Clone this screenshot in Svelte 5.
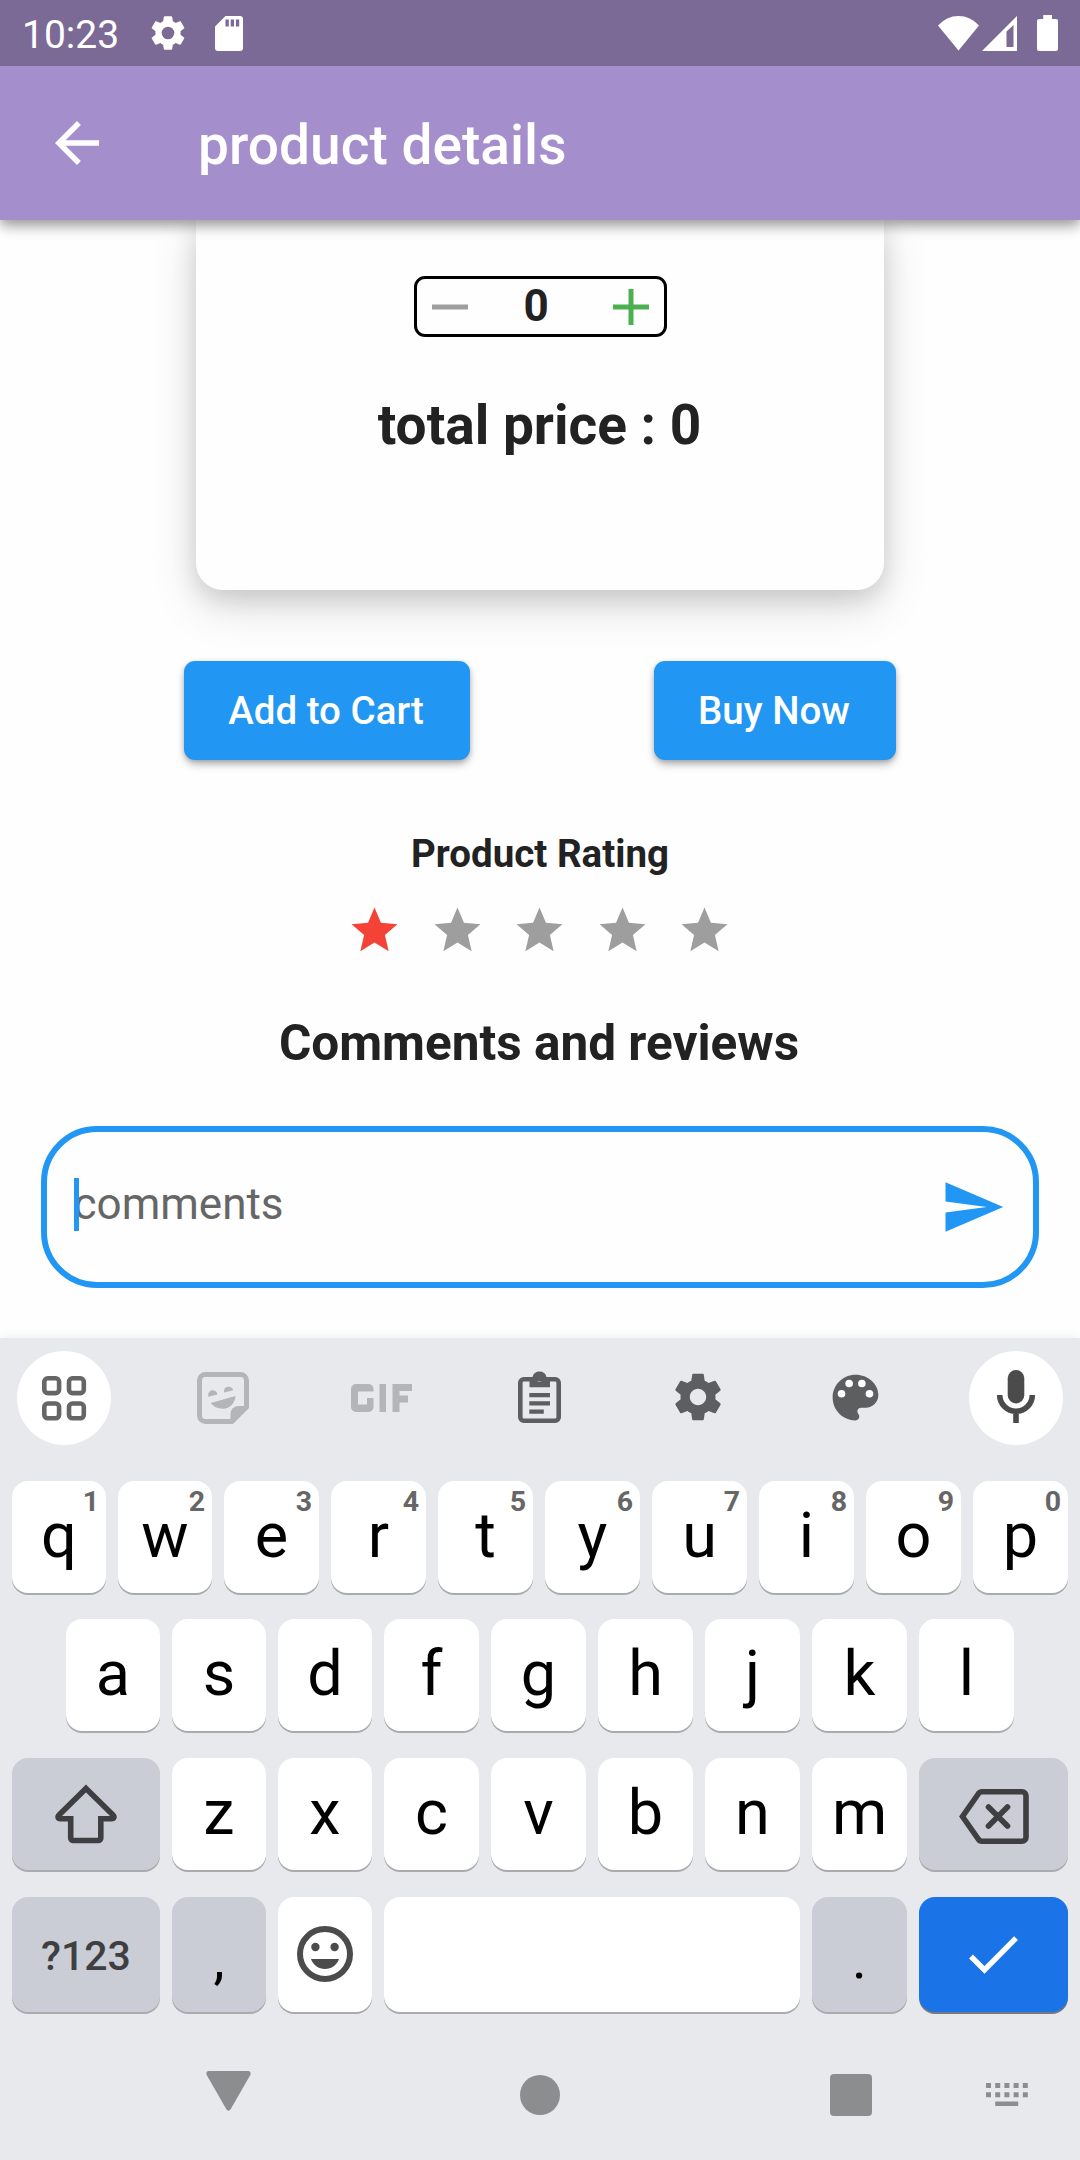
<script>
  const stars = [1, 2, 3, 4, 5];
  let rating = $state(1);
  let quantity = $state(0);

  const topRow = 'qwertyuiop'.split('').map((letter, i) => ({ letter, hint: (i + 1) % 10 }));
  const middleRow = 'asdfghjkl'.split('');
  const bottomRow = 'zxcvbnm'.split('');
</script>

<div class="screen">
  <header class="status">
    <span class="time">10:23</span>
    <svg class="status-gear" viewBox="0 0 24 24"><path d="M19.14 12.94c.04-.3.06-.61.06-.94 0-.32-.02-.64-.07-.94l2.03-1.58c.18-.14.23-.41.12-.61l-1.92-3.32c-.12-.22-.37-.29-.59-.22l-2.39.96c-.5-.38-1.03-.7-1.62-.94L14.400 2.810c-.04-.24-.24-.41-.48-.41h-3.840c-.24 0-.43.17-.47.41L9.250 5.350C8.660 5.590 8.120 5.920 7.630 6.290L5.240 5.330c-.22-.08-.47 0-.59.22L2.740 8.870c-.12.21-.08.47.12.61l2.030 1.580C4.840 11.360 4.800 11.690 4.800 12s.02.64.07.94l-2.030 1.580c-.18.14-.23.41-.12.61l1.920 3.320c.12.22.37.29.59.22l2.390-.96c.5.38 1.030.7 1.620.94l.36 2.540c.05.24.24.41.48.41h3.840c.24 0 .44-.17.47-.41l.36-2.540c.59-.24 1.130-.56 1.620-.94l2.390.96c.22.08.47 0 .59-.22l1.920-3.320c.12-.22.07-.47-.12-.61zM12 15.600A3.600 3.600 0 1 1 12 8.400a3.600 3.600 0 0 1 0 7.200z" /></svg>
    <svg class="status-card" viewBox="0 0 28 35"><path fill-rule="evenodd" d="M10.500 0H25a3 3 0 0 1 3 3v29a3 3 0 0 1-3 3H3a3 3 0 0 1-3-3V10.500zM10.500 3.500v7h3.300v-7zm5.200 0v7H19v-7zm5.200 0v7h3.300v-7z" /></svg>
    <div class="signals">
      <svg class="wifi" viewBox="0 0 41 35"><path d="M0 9.500Q8.500 0 20.500 0T41 9.500L20.500 34.500z" /></svg>
      <svg class="cell" viewBox="0 0 35 35"><path fill-rule="evenodd" d="M35 0v35H0zM24.500 15.500v15.500h7V9z" /></svg>
      <svg class="battery" viewBox="0 0 21 36"><path d="M6.200 0h8.800v4h4a2 2 0 0 1 2 2v28a2 2 0 0 1-2 2H2a2 2 0 0 1-2-2V6a2 2 0 0 1 2-2h4.200z" /></svg>
    </div>
  </header>

  <div class="appbar">
    <svg class="back" viewBox="0 0 24 24"><path d="M20 11H7.830l5.590-5.590L12 4l-8 8 8 8 1.410-1.410L7.830 13H20z" /></svg>
    <h1>product details</h1>
  </div>

  <main>
    <section class="card">
      <div class="counter">
        <svg viewBox="0 0 36 36"><path class="minus" d="M0 15.500h36v5H0z" /></svg>
        <span>{quantity}</span>
        <svg viewBox="0 0 36 36"><path class="plus" d="M15.500 0h5v15.500H36v5H20.500V36h-5V20.500H0v-5h15.500z" /></svg>
      </div>
      <p class="total">total price : {quantity}</p>
    </section>

    <div class="actions">
      <button class="add">Add to Cart</button>
      <button class="buy">Buy Now</button>
    </div>

    <h3>Product Rating</h3>
    <div class="stars">
      {#each stars as n}
        <svg class:on={n <= rating} viewBox="0 0 24 24"><path d="M12 17.270 18.180 21l-1.640-7.030L22 9.240l-7.190-.61L12 2 9.190 8.630 2 9.240l5.460 4.730L5.820 21z" /></svg>
      {/each}
    </div>

    <h2>Comments and reviews</h2>
    <div class="field">
      <span class="caret"></span>
      <span class="placeholder">comments</span>
      <svg viewBox="0 0 24 24"><path d="M2.010 21 23 12 2.010 3 2 10l15 2-15 2z" /></svg>
    </div>
  </main>

  <section class="keyboard">
    <div class="tools">
      <span class="tool round">
        <svg class="i-grid" viewBox="0 0 44 45"><g fill="none" stroke="#666" stroke-width="4.600"><rect x="2.300" y="2.300" width="14.800" height="14.800" rx="3.500" /><rect x="27" y="2.300" width="14.800" height="14.800" rx="3.500" /><rect x="2.300" y="27.500" width="14.800" height="14.800" rx="3.500" /><rect x="27" y="27.500" width="14.800" height="14.800" rx="3.500" /></g></svg>
      </span>
      <span class="tool">
        <svg class="i-sticker" viewBox="0 0 52 52"><path d="M8.500 2.500h35a6 6 0 0 1 6 6V35L35 49.500H8.500a6 6 0 0 1-6-6v-35a6 6 0 0 1 6-6z" fill="none" stroke="#b4b5b7" stroke-width="5" /><g fill="#b4b5b7"><path d="M33.500 50V42a8 8 0 0 1 8-8H50v3L36 51.500z" /><path d="M13.700 31l24.800-7C38 31 33 36.700 26 36.700c-5.500 0-9.800-2.200-12.300-5.700z" /><path d="M11.500 24.800a4.700 4.700 0 1 1 9-2.200zM27 20.600a4.700 4.700 0 1 1 9.200-2.400z" /></g></svg>
      </span>
      <span class="tool">
        <svg class="i-gif" viewBox="0 0 61 28"><path fill="#b4b5b7" d="M5 0h12.500a5 5 0 0 1 5 5v2.500H7v13h9V14h6.500v9a5 5 0 0 1-5 5H5a5 5 0 0 1-5-5V5a5 5 0 0 1 5-5zM28.500 0H35v28h-6.500zM41.500 0H61v7H48.500v4.500h8.500v7h-8.500V28h-7z" /></svg>
      </span>
      <span class="tool">
        <svg class="i-clip" viewBox="0 0 43 52"><rect x="2.300" y="8.300" width="38.400" height="41.400" rx="3.500" fill="none" stroke="#5d5e60" stroke-width="4.600" /><path fill="#5d5e60" fill-rule="evenodd" d="M11.500 6h3a7.200 7.200 0 0 1 14 0h3.500v10.300H11.500zM21.400 6a2.500 2.500 0 1 0 0 5 2.500 2.500 0 0 0 0-5zM11.300 22H32v4.300H11.300zM11.300 30.200H32v4.300H11.300zM11.300 38.400h14.500v4.300H11.300z" /></svg>
      </span>
      <span class="tool">
        <svg class="i-gear" viewBox="0 0 24 24"><path fill="#5d5e60" d="M19.430 12.980c.04-.32.070-.64.070-.98s-.03-.66-.07-.98l2.110-1.650c.19-.15.240-.42.120-.64l-2-3.460c-.12-.22-.39-.3-.61-.22l-2.490 1c-.52-.4-1.080-.73-1.690-.98l-.38-2.650C14.460 2.180 14.250 2 14 2h-4c-.25 0-.46.180-.49.420l-.38 2.650c-.61.250-1.170.590-1.690.980l-2.490-1c-.23-.09-.49 0-.61.220l-2 3.460c-.13.220-.07.490.120.640l2.110 1.650c-.04.320-.07.650-.07.980s.03.660.070.980l-2.110 1.650c-.19.150-.24.420-.12.640l2 3.460c.12.220.390.300.610.220l2.490-1c.52.400 1.080.730 1.690.980l.38 2.650c.03.240.240.420.490.420h4c.25 0 .460-.18.490-.42l.38-2.650c.61-.25 1.170-.59 1.690-.98l2.490 1c.23.090.490 0 .610-.22l2-3.460c.12-.22.070-.49-.12-.64l-2.110-1.650zM12 15.500c-1.930 0-3.500-1.570-3.500-3.500s1.570-3.500 3.500-3.500 3.500 1.570 3.500 3.500-1.570 3.500-3.500 3.500z" /></svg>
      </span>
      <span class="tool">
        <svg class="i-palette" viewBox="0 0 24 24"><path fill="#5d5e60" d="M12 3c-4.970 0-9 4.030-9 9s4.030 9 9 9c.83 0 1.500-.67 1.500-1.500 0-.39-.15-.74-.39-1.010-.23-.26-.38-.61-.38-.99 0-.83.670-1.500 1.500-1.500H16c2.760 0 5-2.240 5-5 0-4.420-4.030-8-9-8z" /><g fill="#fff"><circle cx="6.500" cy="10.500" r="1.500" /><circle cx="9.500" cy="6.500" r="1.500" /><circle cx="14.500" cy="6.500" r="1.500" /><circle cx="17.500" cy="10.500" r="1.500" /></g></svg>
      </span>
      <span class="tool round">
        <svg class="i-mic" viewBox="0 0 38 53"><rect x="10.700" y="0" width="16.600" height="33.500" rx="8.300" fill="#4b4b4b" /><path d="M2.700 25a16.300 16.300 0 0 0 32.600 0M19 41v12" fill="none" stroke="#4b4b4b" stroke-width="5.600" /></svg>
      </span>
    </div>

    <div class="row top">
      {#each topRow as key}
        <span class="key">{key.letter}<sup>{key.hint}</sup></span>
      {/each}
    </div>
    <div class="row middle">
      {#each middleRow as letter}
        <span class="key">{letter}</span>
      {/each}
    </div>
    <div class="row bottom">
      <span class="key wide dark">
        <svg class="i-shift" viewBox="0 0 62 60"><path d="M31 4.500 57.500 30.500c2.500 2.500 1.500 4.200-1 4.200H45.800V54a2.500 2.500 0 0 1-2.500 2.500H18.200a2.500 2.500 0 0 1-2.500-2.500V34.700H5.500c-2.500 0-3.500-1.700-1-4.200z" fill="none" stroke="#3f3f41" stroke-width="5.600" /></svg>
      </span>
      {#each bottomRow as letter}
        <span class="key">{letter}</span>
      {/each}
      <span class="key wide dark">
        <svg class="i-erase" viewBox="0 0 70 55"><path d="M23 2.800h40a4 4 0 0 1 4 4v41.400a4 4 0 0 1-4 4H23a4.500 4.500 0 0 1-3.800-2.200L3.500 27.500 19.200 5A4.500 4.500 0 0 1 23 2.800z" fill="none" stroke="#3f3f41" stroke-width="5.600" /><path d="m29.500 18 19 19m0-19-19 19" stroke="#3f3f41" stroke-width="5.600" stroke-linecap="round" /></svg>
      </span>
    </div>
    <div class="row last">
      <span class="key wide dark symbols">?123</span>
      <span class="key dark punct">,</span>
      <span class="key">
        <svg class="i-smile" viewBox="0 0 56 56"><circle cx="28" cy="28" r="25" fill="none" stroke="#4b4b4b" stroke-width="6" /><g fill="#4b4b4b"><circle cx="18.400" cy="21" r="4.200" /><circle cx="37.600" cy="21" r="4.200" /><path d="M14 33h28c-2 6-7.500 10-14 10s-12-4-14-10z" /></g></svg>
      </span>
      <span class="key"></span>
      <span class="key dark punct">.</span>
      <span class="key wide enter">
        <svg class="i-check" viewBox="0 0 49 37"><path d="M2 20.500 15.500 34 47 2.200" fill="none" stroke="#fff" stroke-width="5.400" /></svg>
      </span>
    </div>

    <nav>
      <svg class="n-back" viewBox="0 0 45 40"><path d="M3 0h39a2.600 2.600 0 0 1 2.300 4L24.500 38.500a2.300 2.300 0 0 1-4 0L.700 4A2.600 2.600 0 0 1 3 0z" /></svg>
      <svg class="n-home" viewBox="0 0 40 40"><circle cx="20" cy="20" r="20" /></svg>
      <svg class="n-recent" viewBox="0 0 42 42"><rect width="42" height="42" rx="4" /></svg>
      <svg class="n-keys" viewBox="0 0 42 23"><path d="M0 0h5v5H0zm9.200 0h5v5h-5zm9.200 0h5v5h-5zm9.200 0h5v5h-5zm9.200 0h5v5h-5zM0 9.200h5v5H0zm9.200 0h5v5h-5zm9.200 0h5v5h-5zm9.200 0h5v5h-5zm9.200 0h5v5h-5zM9.200 18.400h23V23h-23z" /></svg>
    </nav>
  </section>
</div>

<style>
  :global(body) {
    margin: 0;
    background: #fff;
  }

  .screen {
    width: 1080px;
    height: 2160px;
    overflow: hidden;
    display: flex;
    flex-direction: column;
    font-family: Roboto, 'Liberation Sans', sans-serif;
    color: #222;
  }

  svg {
    display: block;
    flex: none;
    overflow: visible;
  }

  h1,
  h2,
  h3,
  p {
    margin: 0;
    white-space: nowrap;
  }

  .status {
    height: 66px;
    box-sizing: border-box;
    padding: 0 22px;
    display: flex;
    align-items: center;
    background: #7c6a96;
    color: #fff;
    fill: #fff;
    position: relative;
    z-index: 2;
  }

  .time {
    width: 125px;
    font-size: 39px;
    line-height: 44px;
    padding-top: 3px;
  }

  .status-gear {
    width: 42px;
    height: 42px;
  }

  .status-card {
    width: 28px;
    height: 35px;
    margin-left: 26px;
  }

  .signals {
    margin-left: auto;
    display: flex;
    align-items: center;
  }

  .wifi {
    width: 41px;
    height: 35px;
    margin-right: 3px;
  }

  .cell {
    width: 35px;
    height: 35px;
    margin-right: 20px;
  }

  .battery {
    width: 21px;
    height: 36px;
  }

  .appbar {
    height: 154px;
    flex: none;
    display: flex;
    align-items: center;
    background: #a48ecc;
    color: #fff;
    fill: #fff;
    position: relative;
    z-index: 1;
    box-shadow: 0 5px 11px rgba(0, 0, 0, 0.3), 0 10px 14px -2px rgba(0, 0, 0, 0.12);
  }

  .back {
    width: 66px;
    height: 66px;
    margin: 0 88px 0 44px;
  }

  h1 {
    font-size: 55px;
    font-weight: 500;
    line-height: 64px;
    letter-spacing: 0.04px;
    padding-top: 4px;
  }

  main {
    height: 1118px;
    flex: none;
    overflow: hidden;
    background: #fefefe;
    display: flex;
    flex-direction: column;
    align-items: center;
  }

  .card {
    width: 688px;
    height: 369.500px;
    flex: none;
    border-radius: 0 0 27px 27px;
    background: #fefefe;
    display: flex;
    flex-direction: column;
    align-items: center;
    box-shadow: 0 16px 48px rgba(0, 0, 0, 0.14), 0 8px 24px rgba(0, 0, 0, 0.12);
  }

  .counter {
    box-sizing: border-box;
    width: 253px;
    height: 61px;
    margin-top: 56px;
    padding: 0 15px;
    border: 3px solid #000;
    border-radius: 11px;
    display: flex;
    align-items: center;
    justify-content: space-between;
  }

  .counter svg {
    width: 36px;
    height: 36px;
  }

  .counter span {
    font-size: 44px;
    font-weight: 700;
    line-height: 52px;
    margin: -2px 8px 0 0;
  }

  .minus {
    fill: #9e9e9e;
  }

  .plus {
    fill: #4caf50;
  }

  .total {
    font-size: 55px;
    font-weight: 700;
    line-height: 64px;
    margin: 56px 1px 0 0;
  }

  .actions {
    width: 712px;
    margin-top: 71.500px;
    display: flex;
    justify-content: space-between;
  }

  button {
    height: 98.500px;
    padding: 1px 2px 0 0;
    border: 0;
    border-radius: 11px;
    background: #2296f3;
    color: #fff;
    font: 500 38.500px/46px Roboto, sans-serif;
    box-shadow: 0 5px 8px -1px rgba(0, 0, 0, 0.3), 0 1px 5px rgba(0, 0, 0, 0.15);
  }

  .add {
    width: 286px;
  }

  .buy {
    width: 242px;
  }

  h3 {
    font-size: 38.500px;
    font-weight: 700;
    line-height: 46px;
    margin-top: 71.500px;
  }

  .stars {
    display: flex;
    gap: 27.500px;
    margin: 26px 0.500px 0 0;
  }

  .stars svg {
    width: 55px;
    height: 55px;
    fill: #9e9e9e;
  }

  .stars .on {
    fill: #f44336;
  }

  h2 {
    font-size: 49.500px;
    font-weight: 700;
    line-height: 60px;
    margin: 55px 2px 0 0;
  }

  .field {
    box-sizing: border-box;
    width: 998px;
    height: 162px;
    flex: none;
    margin-top: 53px;
    padding: 0 27px 0 26.500px;
    border: 6px solid #2296f3;
    border-radius: 56px;
    display: flex;
    align-items: center;
  }

  .caret {
    width: 5.500px;
    height: 53px;
    margin: -6px -5.500px 0 0;
    background: #2296f3;
    z-index: 1;
  }

  .placeholder {
    flex: 1;
    font-size: 44px;
    line-height: 52px;
    margin-top: -6px;
    color: #666;
  }

  .field svg {
    width: 66px;
    height: 66px;
    fill: #2296f3;
  }

  .keyboard {
    flex: 1;
    background: #e8e9ed;
    box-shadow: 0 0 10px rgba(0, 0, 0, 0.08);
    position: relative;
    display: flex;
    flex-direction: column;
  }

  .tools {
    height: 94px;
    margin: 13px 17px 36px;
    display: flex;
    justify-content: space-between;
  }

  .tool {
    width: 94px;
    height: 94px;
    display: grid;
    place-items: center;
  }

  .round {
    border-radius: 50%;
    background: #fff;
  }

  .i-grid { width: 44px; height: 45px; }
  .i-sticker { width: 52px; height: 52px; margin-top: -1px; }
  .i-gif { width: 61px; height: 28px; margin-top: -1px; }
  .i-clip { width: 43px; height: 52px; margin: -2px 1px 0 0; }
  .i-gear { width: 56px; height: 56px; margin: -2px 2px 0 0; }
  .i-palette { width: 61px; height: 61px; margin: -2px 3px 0 0; }
  .i-mic { width: 38px; height: 53px; margin-top: -3px; }
  .i-shift { width: 62px; height: 60px; }
  .i-erase { width: 70px; height: 55px; margin-top: 5px; }
  .i-smile { width: 56px; height: 56px; margin-top: 2px; }
  .i-check { width: 49px; height: 37px; }

  .row {
    height: 112px;
    flex: none;
    padding: 0 12px;
    margin-bottom: 26px;
    display: grid;
    gap: 12px;
  }

  .top {
    grid-template-columns: repeat(2, 94px) repeat(8, 95px);
  }

  .middle {
    padding: 0 66px;
    grid-template-columns: repeat(3, 94px) repeat(6, 95px);
  }

  .bottom {
    margin: 1px 0 27px;
    grid-template-columns: 148px repeat(2, 94px) repeat(5, 95px) 149px;
  }

  .last {
    height: 115px;
    margin-bottom: 0;
    grid-template-columns: 148px repeat(2, 94px) 416px 95px 149px;
  }

  .key {
    position: relative;
    box-sizing: border-box;
    border-radius: 16px;
    background: #fff;
    color: #000;
    box-shadow: 0 2px 0 #a9abae;
    display: flex;
    align-items: center;
    justify-content: center;
    padding-bottom: 3px;
    font-size: 63px;
    line-height: 72px;
  }

  .key sup {
    position: absolute;
    top: 4px;
    right: 7px;
    font-size: 28.500px;
    font-weight: 700;
    line-height: 34px;
    color: #666;
  }

  .wide {
    padding-bottom: 0;
  }

  .dark {
    background: #cbcdd6;
  }

  .symbols {
    font-size: 41px;
    font-weight: 500;
    color: #3f3f41;
    padding-top: 3px;
  }

  .punct {
    padding-top: 12px;
    font-size: 56px;
  }

  .enter {
    background: #1b73e8;
    box-shadow: 0 2px 0 #77797d;
  }

  nav {
    height: 148px;
    box-sizing: border-box;
    padding: 17px 52px 0 206px;
    display: flex;
    align-items: center;
    fill: #8c8d8f;
  }

  .n-back { width: 45px; height: 40px; margin: -7px 269px 0 0; }
  .n-home { width: 40px; height: 40px; margin-right: 270px; }
  .n-recent { width: 42px; height: 42px; }
  .n-keys { width: 42px; height: 23px; margin-left: auto; }
</style>
